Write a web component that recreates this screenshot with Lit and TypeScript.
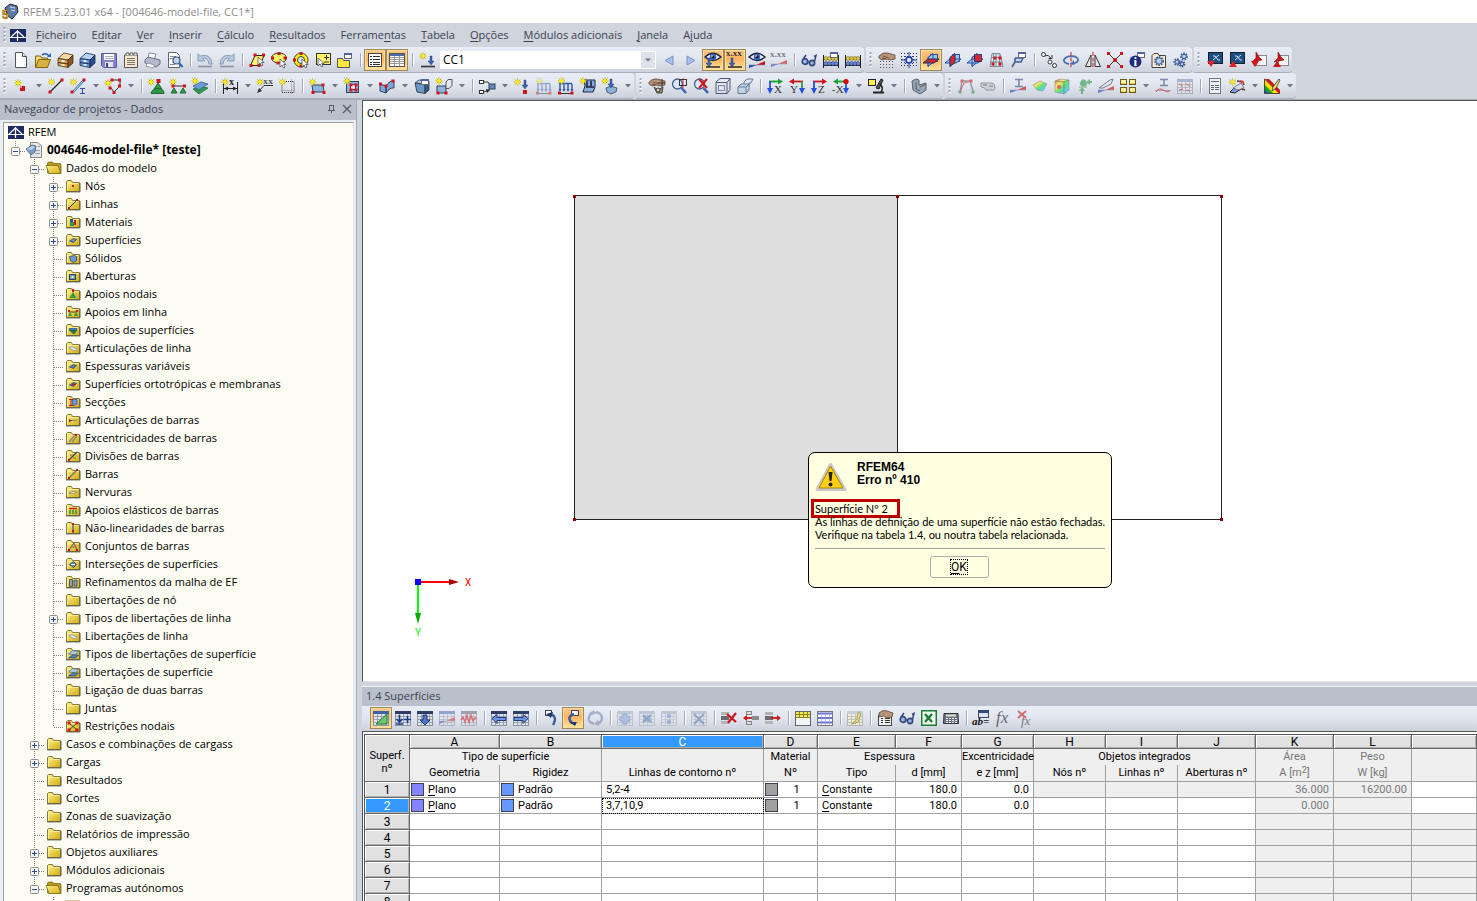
import { LitElement, html, css, svg, nothing, type TemplateResult } from "lit";
import { customElement } from "lit/decorators.js";
import { classMap } from "lit/directives/class-map.js";

/* ---------- small drawing vocabulary for the 16 px icons ---------- */
const P = (d: string, s = "none", f = "none", w = 1) =>
  svg`<path d=${d} stroke=${s} fill=${f} stroke-width=${w} />`;
const R = (x: number, y: number, w: number, h: number, f: string, s = "none") =>
  svg`<rect x=${x} y=${y} width=${w} height=${h} fill=${f} stroke=${s} />`;
const C = (x: number, y: number, r: number, f: string, s = "none", w = 1) =>
  svg`<circle cx=${x} cy=${y} r=${r} fill=${f} stroke=${s} stroke-width=${w} />`;
const T = (x: number, y: number, t: string, f: string, size = 7, style = "normal", weight = "bold") =>
  svg`<text x=${x} y=${y} fill=${f} font-size=${size} font-style=${style} font-weight=${weight} font-family="Liberation Serif, serif">${t}</text>`;
const G = (o: number, ...k: unknown[]) => svg`<g opacity=${o}>${k}</g>`;

const RED = "#d0141c", BLUE = "#2a4f9e", INK = "#222", GREEN = "#2f9a48", PANE = "#9cc4ee";
const star = (x = 3.5, y = 4) => [
  P(`M${x - 3.5} ${y}h7M${x} ${y - 3.5}v7M${x - 2.5} ${y - 2.5}l5 5M${x + 2.5} ${y - 2.5}l-5 5`, "#b8a800"),
  P(`M${x - 2.5} ${y}h5M${x} ${y - 2.5}v5`, "#ffee20", "none", 1.6),
];
const node = (x: number, y: number, c = RED) => R(x - 1.5, y - 1.5, 3, 3, c);
const cursor = (x: number, y: number) =>
  P(`M${x} ${y}v8l2-2 1.5 3 1.5-.8-1.400-2.700h2.600z`, "#555", "#fff", 0.8);
const arrow = (x: number, y: number, c = "#3c64b8") => P(`M${x - 1} ${y}h2v5h2l-3 4-3-4h2z`, "#1c3468", c, 0.4);
const win = (x: number, y: number) => [R(x + 0.5, y + 0.5, 7, 5, "#fff", "#667"), R(x, y, 8, 2, "#5464a0")];
const tris = (y = 15) => [P(`M0 ${y}v-3l8 0z`, "none", "#2444c8"), P(`M16 ${y - 7}v4h-9z`, "none", RED), P(`M0 ${y - 3}h16`, "#889", "none", 0.6)];
const dots = (x: number, y: number, w: number, h: number, c = "#555") => {
  const out = [];
  for (let j = y; j <= y + h; j += 3) out.push(svg`<path d=${`M${x} ${j}.5h${w}`} stroke=${c} stroke-dasharray="1 2" />`);
  return out;
};
const sheet = (head = "#3c62a8", line = "#8a93a5", body = "#dfe5e6") => [
  R(0.5, 1.5, 15, 14, body, line), P("M0 6.500h16M0 9.500h16M0 12.500h16M4.500 2v13M8.500 2v13M12.500 2v13", line, "none", 0.8),
  R(0, 1, 16, 3, head),
];
const cabinet = (a: string, b: string, c: string, s: string) => [
  P("M1 6.500L7 1l9 2-5 5z", s, c, 0.8), P("M1 6.500l10 1.500v7.500l-10-2z", s, a, 0.8), P("M11 8l5-5v8l-5 4.500z", s, b, 0.8),
  P("M1 10.500l10 1.500", s), P("M4.500 9h3M4.500 13h3", "#fff", "none", 1.300),
];
const solid = (f = "#6f97c8", t = "#b9d2ee", s = "#3c5c88") => [
  P("M1 5l4-3 10 1-4 3z", "#234", t, 0.8), P("M1 5l10 1v9.500l-8-1.500z", "#234", f, 0.8), P("M11 6l4-3v9l-4 3.500z", "#234", s, 0.8),
];
const glass = [C(6.500, 6, 5, "#d9e8f8", "#4a5f86", 1.300), P("M10.500 10l4.500 5", "#3f63b0", "none", 2.6)];
const eye = (y = 5) => [
  P(`M0 ${y}q8-7.500 16 0q-8 7-16 0z`, "#1c2440", "#e8eefa", 1.400), C(8, y, 3.200, "#3560b8"), C(8, y, 1.300, "#111"), C(7, y - 1, 0.8, "#fff"),
];
const specs = (c = "#33497c") => [
  C(4, 9.500, 2.800, "#9cb8e8", c, 1.700), C(11, 11, 2.600, "#9cb8e8", c, 1.700), P("M1.500 8L5 3M13.500 9.500l1.500-6-2 1M6.500 10h2", c, "none", 1.500),
];
const abacus = [
  P("M.5 3v13M15.500 3v13M0 7.500h16M0 13.500h16", INK),
  ...[3, 6.500, 10, 13].map((x) => C(x, 6.500, 1.900, "#e6cf4a", "#665c20", 0.6)),
  ...[3, 6.500, 10, 13].map((x) => C(x, 11.500, 1.900, "#6c8cd8", "#26366a", 0.6)),
];
const gear = (x: number, y: number, r: number, c = "#3a5c9c") => [
  svg`<circle cx=${x} cy=${y} r=${r} fill="none" stroke=${c} stroke-width="1.800" stroke-dasharray="1.600 1" />`,
  C(x, y, r - 0.8, "#b8cbea", c, 1),
];
/* three crossing work planes; the active one is filled red and drawn in front */
const planes = (active: number) => {
  const shapes = ["M0 11l5-4h11l-5 4z", "M5 5.500l5-4v9l-5 4z", "M7.500 2.500h7v7h-7z"];
  const order = [2, 1, 0].filter((i) => i !== active).concat(active);
  return [...order.map((i) => P(shapes[i], i === active ? "#1c2c5c" : BLUE, i === active ? "#e0242c" : PANE)), P("M7.500 2.500h7v7M10 1.500l-5 4v9", BLUE, "none", 0.8)];
};
const axes = (l: string, flip = false, z = "#2450e0") => {
  const h = l === "X" || l === "-X" ? "#18a030" : RED;
  return [
    P(flip ? "M14 3.500H3" : "M2 3.500h11", h, "none", 1.800),
    P(flip ? "M5 .5l-5 3 5 3z" : "M11 .5l5 3-5 3z", "none", h),
    P(flip ? "M13 3v8" : "M3 3v8", l === "Y" ? GREEN : z, "none", 1.800), P(flip ? "M10 10h6l-3 6z" : "M0 10h6l-3 6z", "none", z),
    T(l === "-X" ? -1 : flip ? 1 : 7, 15, l, "#333", 11, "normal", "normal"),
  ];
};
const hand = [P("M0 4q4-4 8-3l8 2v4l-5 1-4-1-4 1-3-2z", "#5a4636", "#b89478", 0.8), P("M4 4l6 2M3 6l4 1", "#5a4434", "none", 0.8)];
const gridLoad = [P("M1 5.500h13M2 6v6M6 6v6M10 6v6M14 6v6", "#2f57a8", "none", 1.400), P("M.5 11h3l-1.500 3zM4.500 11h3l-1.500 3zM8.500 11h3l-1.500 3zM12.500 11h3l-1.500 3z", "none", "#2f57a8"), P("M2 15.500h12", "#333"), node(1.500, 15), node(14, 15)];
const undoBody = (m: boolean) => svg`<g transform=${m ? "matrix(-1 0 0 1 16 0)" : ""}>
  ${P("M1 2v7h7L5.500 6.500q5-2 6.500 5.500h3q-1-11-11.500-8z", "#8a9cb8", "#b9cae2")}${P("M1 14.500h14", "#8a93a5", "none", 1.600)}</g>`;
const rows3 = (x: number, w: number) => [R(x, 2, w, 3, "#b4b4b4"), R(x, 6, w, 4, "#6c6c6c"), R(x, 11, w, 3, "#b4b4b4")];
const rainbow = (d: string) => svg`<path d=${d} fill="url(#rainbow)" stroke="#777" stroke-width=".6" />`;

const ICONS: Record<string, unknown> = {
  new: [P("M2.500.5h7l4 4v11h-11z", "#555", "#fff"), P("M9.500.5v4h4", "#555", "#ddd")],
  open: [P("M.5 15V4h5l1 2h6v3", "#7b6414", "#f4dc7c"), P("M.5 15.500l3-8h12l-3 8z", "#7b6414", "#d8b040"), P("M7 3q4-3 7 1", "#2f62b8", "none", 1.600), P("M12 5h4V1z", "none", "#2f62b8")],
  cabBrown: cabinet("#d8a050", "#8a5820", "#f4d8a8", "#4c3010"), cabBlue: cabinet("#6c94d8", "#2a4c94", "#b8d0f4", "#142850"),
  save: [P("M.5 1.500h15v14h-13l-2-2z", "#5c5c98", "#8484cc"), R(3, 2, 10, 6, "#fff"), P("M4 4.500h8M4 6.500h8", "#aab"), R(4, 10, 8, 5, "#e4e4f0"), R(5, 11, 2, 4, "#448")],
  notes: [P("M1.500 3h13v12.500h-13z", "#555", "#fbe8cc"), P("M3 3V1h3v2M7 3V1h3v2M11 3V1h3v2", "#555", "#fff"), P("M4 6.500h8M4 8.500h8M4 10.500h8M4 12.500h8", "#777")],
  print: [P("M4 1l7 1-2 7-6-1z", "#889", "#fff"), P("M0 8l3-3 12 3v4l-4 3-11-4z", "#556", "#b4bace", 0.8), P("M2 11l8 2-2 3-7-2z", "#889", "#fff", 0.8)],
  preview: [P("M1.500.5h8l3 3v12h-11z", "#666", "#fff"), P("M3 4.500h6M3 6.500h3M3 12.500h5", "#889"), C(9.500, 8.500, 3.500, "#bcd4f4", "#456", 1.200), P("M12 11l3.500 4", "#3768b8", "none", 2.200)],
  undo: undoBody(false), redo: undoBody(true),
  selPar: [P("M1.500 13.500L6 3.500h9l-4 10z", INK, "#fff46a"), node(6, 3), node(14.500, 3), node(2, 13.500), node(10, 13.500), cursor(9, 5)],
  selEll: [svg`<ellipse cx="8" cy="6" rx="7.500" ry="5" fill="#fff46a" stroke="#333" />`, node(8, 1.500), node(1.500, 6), node(14, 6), node(7, 11), cursor(9, 7)],
  selRing: [C(8, 8, 7, "#fff000", "#444"), C(8, 8, 3.500, "#dfe5f0", "#444"), node(8, 1.500), node(1.500, 8), node(8, 14), cursor(9, 7)],
  selBox: [R(1.500, 1.500, 14, 11, "#fff46a", "#333"), P("M9 5.500h5M11.500 3v5M9 10h5", "#333"), cursor(3, 6)],
  selWin: [P("M.5 6.500h5l1 2h6v7h-12z", "#555", "#ffe840"), ...win(7, 1)],
  list: [R(1.500, 1.500, 13, 13, "#fff", "#444"), P("M3 4.500h2M3 7.500h2M3 10.500h2M3 12.500h2", "#333"), P("M6 4.500h7M6 7.500h7M6 10.500h7M6 12.500h7", "#333")],
  table: [R(.5, 1.500, 15, 13, "#fff", "#555"), R(1, 2, 14, 2, "#4a6ca8"), P("M1 5.500h14M1 7.500h14M1 9.500h14M1 11.500h14M5.500 4v10M10.500 4v10", "#999")],
  loadNew: [star(4, 4), arrow(12, 4), P("M2 14.500h14", "#333", "none", 1.600)],
  prev: P("M12 4v9L4 8.500z", "#7c92c0", "#a8c0ee"), next: P("M4 4v9l8-4.500z", "#7c92c0", "#a8c0ee"),
  eyeLoad: [eye(5), arrow(4, 6), P("M1 15h14", "#333", "none", 1.600)],
  valLoad: [T(-1, 4, "x.xx", "#333", 9), arrow(5, 6), P("M1 15h14", "#333", "none", 1.600)],
  eyeTri: [tris(16), eye(5)], valTri: G(0.6, T(-1, 5, "x.xx", "#333", 9), tris(15)),
  specs: specs(), abacusWin: [abacus, win(7, 0)], abacus,
  handGrid: [dots(1, 9, 15, 6), hand],
  snap: [dots(0, 1, 16, 14, "#333"), P("M8 0v16M0 8h16M4 4l8 8M12 4l-8 8", "#1c38b0"), C(8, 8, 3, "#dde4f4", "#1c38b0", 1.500)],
  planeA: planes(0), planeB: planes(1), planeC: planes(2),
  mesh: [P("M3 1.500h8l3 13h-13zM2.500 5.500h9.500M1.500 10h12M7 2v12M10 2l1 12M4.500 2v12", "#7e8c9c", "#d8ecf4"), node(6, 6), node(11, 6), node(4, 12), node(11, 12)],
  clipWin: [P("M4 6h8l-2 4h-6l-3 5M4 6v4", "#445a90", "#c4d4ee", 1.500), win(7, 0)],
  copy: [C(2.500, 2.500, 2, "#fff", "#333"), C(9, 10, 2, "#fff", "#333"), C(13.500, 13.500, 2, "#fff", "#333"), P("M4 4q4-2 6 3M7.500 6.500h3.500v-3.500", "#333")],
  rotate: [svg`<path d="M8 0v16" stroke=${RED} stroke-dasharray="4 1.500" />`, P("M6 12q-6-1-5-4.500Q4 3 12 4.500q5 2.500 2 5.500l-4 2", "#4a6eb0", "none", 1.800), P("M11 8v5l-4-1z", "none", "#4a6eb0")],
  mirror: [svg`<path d="M8 0v16" stroke=${RED} stroke-dasharray="4 1.500" />`, P("M6 3v11.500h-5.500z", "#333", "#e8e8e8"), P("M10 3v11.500h5.500z", "#333", "#e8e8e8")],
  cross: [P("M1 1l14 14M15 1l-14 14", "#333"), node(1.500, 1.500), node(14.500, 1.500), node(1.500, 14.500), node(14.500, 14.500), C(8, 8, 2, RED)],
  info: [win(8, 0), C(6.500, 9.500, 6, "#1c2c78"), T(4.500, 14, "i", "#fff", 13)],
  gearBox: [P("M1 3.500l2-2h4l1 2h6.500v12h-13.500z", "#444", "#f6e8cc"), gear(8, 9, 4)], gears: [gear(4, 10, 2.800), gear(9, 12, 2.500), gear(11, 4.500, 3)],
  cadDown: [R(1.500, .5, 14, 11, "#1c5080", "#123"), P("M6 4h2l3 4h2M12 3l-6 5", "#cfe6ff"), P("M0 9h8l-4 6z", "none", "#e02424")],
  cadUp: [R(1.500, .5, 14, 11, "#1c5080", "#123"), P("M6 4h2l3 4h2M12 3l-6 5", "#cfe6ff"), P("M0 15h8l-4-6z", "none", "#e02424")],
  pdfDown: [R(5.500, 3.500, 10, 10, "#f4f4f4", "#888"), P("M5 0l3 5 3 3-10 2 4-4z", "#701010", RED, .6), P("M0 9h8l-4 6z", "none", RED)],
  pdfUp: [R(5.500, 3.500, 10, 10, "#f4f4f4", "#888"), P("M5 0l3 5 3 3-10 2 4-4z", "#701010", RED, .6), P("M0 15h8l-4-6z", "none", RED)],

  nodeNew: [star(5, 5), R(7, 8, 5, 5, RED), R(7, 8, 2, 2, "#f88")],
  line: [P("M2 14L14 2", "#222", "none", 1.300), star(3.500, 4), node(2, 14), node(14, 2)],
  beam: [P("M3 14L14 2", "#3c6ea8", "none", 2.400), P("M3 14L14 2", "#c8dcf0", "none", 1), star(3.500, 4), node(2, 14), node(14, 2), P("M10 10.500h5M10 15.500h5M12.500 10v5", "#3450a0")],
  poly: [P("M6 2h9v6l-6 6-3-4", "#333"), star(3, 5), node(7, 2), node(14.500, 2), node(14.500, 8), node(9, 14.500), node(5, 10)],
  supNode: [star(3, 4), P("M10 5l-4 6h8z", "#1f6a34", GREEN), R(8.500, 1, 4, 4, RED), P("M3 15.500q1-5 7-5t6 5z", "#1f6a34", GREEN)],
  supLine: [star(3, 4), P("M2 8h13", "#333"), node(3, 8), node(14.500, 8), P("M4 10l-3 5h6zM13 10l-3 5h6z", "#1f6a34", GREEN)],
  supSurf: [P("M1 11l8-3 7 2-9 6z", "#1f6a34", GREEN, 0.8), P("M1 8l8-4 7 2-9 6z", "#345c90", "#6c9cd8", 0.8), star(3, 3)],
  dim: [P("M1.500 4v12M15.500 4v12M1 10.500h15", "#222"), P("M2 10.500l4-2v4zM15 10.500l-4-2v4z", "none", "#222"), star(3, 4), T(7, 7, "x", "#222", 10)],
  xx: [P("M1 14L7 7.500h9", "#333"), P("M0 15l2-5 3 3z", "none", "#333"), star(3, 4), T(6, 6, "XX", "#333", 7)],
  dotRect: [svg`<path d="M5 3.500h10v11h-12v-9" fill="none" stroke="#333" stroke-dasharray="1 1" />`, P("M12.500 1v15M2 12.500h14", "#999", "none", .6), star(3.500, 4)],
  surf: [P("M3 7h11l1 7H4z", "#345", "#8cb4e0"), star(3.500, 4), node(14, 7), node(4, 14.500), node(15, 14.500)],
  opening: [R(2.500, 3.500, 12, 11, "#8cb4e0", "#345"), R(6.500, 6.500, 5, 5, "#eef", "#a22"), node(7, 7), node(12, 7), node(7, 12), node(12, 12), star(3, 3)],
  curved: [P("M1 6l6 2v7l-6-2zM7 8q4-6 8-5v7q-4-1-8 5z", "#345", "#7ca8dc"), node(1.500, 6), node(7, 8), node(14, 3)],
  solidWin: [solid(), win(7, 1)],
  solids: [P("M1 8h9v7h-9z", "#345", "#8cb4e0"), P("M10 4l2-2.500h4v6l-3 3h-3z", "#555", "#e4e8ee"), star(3, 3), node(2, 15), node(10, 15)],
  joint: [R(.5, 2.500, 4, 3, "#fff", "#333"), R(.5, 12.500, 4, 3, "#fff", "#333"), P("M5 4h4l2 3M5 14l5-2 2-3", "#333"), P("M7 11l4 1-3 3z", "none", "#222"), R(10, 6, 6, 5, "#5c8cc8", "#345")],
  loadNode: [star(3.500, 4), arrow(11, 2), R(9, 12, 4, 4, RED)],
  loadLineOff: G(0.45, gridLoad, star(3.500, 3)), loadLine: [gridLoad, star(3.500, 3)],
  loadSurf: [P("M4 2h11v7l-2 5H3l2-6z", "#224", "#86aede"), P("M7 3v6M11 3v6M6 9h8", "#224", "none", 1.600), star(3, 3)],
  loadSolid: [P("M4 10l5-2 6 2-1 4-5 2-4-2z", "#345", "#8cb0d8", .8), arrow(9, 1), star(3, 3)],
  pan: [hand, P("M13 1v8M9 5h7", "#333"), P("M5 9l4 3 5-3-1 6h-5z", "#443", "#a09070"), C(9, 12, 2, "#d8d4c8", "#333")],
  zoomRect: [glass, R(8.500, 1.500, 7, 6, "none", "#333"), P("M12 0v10", RED, "none", .8)],
  zoomX: [glass, P("M6 1l8 9M14 1L6 10", RED, "none", 2)],
  wire: [P("M1 4l4-3.500h10v11l-3 4H1zM1 4.500h11v11M12 4.500l3-4", "#4c5a78"), R(3.500, 7.500, 6, 5, "#dde4f0", "#7c8aa8")],
  boxes: [P("M7 4l3-3h6l-2 4h-2v4h-5z", "#667a98", "#dce4f0"), P("M1 9l3-3h8v6l-3 3.500H1z", "#667a98", "#c4d2e6"), P("M1 9h8v6M9 9l3-3", "#667a98")],
  axX: axes("X"), axY: axes("Y", true), axZ: axes("Z"), axNX: [axes("-X", true), C(13, 3.500, 2.600, "#d00")],
  scope: [R(.5, 1.500, 7, 6, "#fff14a", "#222"), P("M5 14.500h11", "#222", "none", 2), P("M8 10l5-9 2 1-4 9z", "#222", "#555"), P("M12 6q4 4 1 8", "#222", "none", 1.500)],
  greySolid: [P("M1 3l4-2 3 1v5l7-2v7l-6 4-7-4z", "#555f6c", "#98a4b4"), P("M5 4v7l4 2M9 9l6-3", "#555f6c")],
  frame: G(0.6, P("M2 15L4 3h8l3 10", "#667", "none", 1.500), node(4, 3), node(13, 3), node(2, 14, GREEN), node(15, 14, GREEN), P("M2 14L6 5l7-2", RED)),
  roller: G(0.6, P("M1 5h10q4 0 4 4t-4 3H6q-1-3-5-3z", "#666", "#c8c8c8"), P("M3 7h4M9 8h4", "#333")),
  ibeam: G(0.65, P("M5 1.500h8M5 8.500h8M9 1v7", "#445a90", "none", 1.600), tris(15)),
  rainbowSurf: G(0.75, rainbow("M1 7l7-4 7 3-4 7-6-1z")), rainbowCube: G(0.75, rainbow("M1 3l5-2 9 1v10l-5 4-9-2z"), P("M1 3l9 1 5-2M10 4v12", "#555", "none", .7), C(5, 9, 2, "#e33")),
  greenArrows: G(0.6, P("M6 2h3l2 4-2 2h-3l-2-2zM3 9h8", GREEN, GREEN), P("M10 4l4-3v2h2v2h-2v2zM5 16v-3h-2l3-4 3 4h-2v3z", "none", GREEN)),
  knife: G(0.65, P("M1 10L12 2l3-1-2 5-8 4z", "#445", "#e8ecf4"), tris(15)),
  blocks: [[0, 1], [9, 1], [0, 9], [9, 9]].map(([x, y]) => [R(x + .5, y + .5, 6, 5, "#e8cc58", "#6a5c20"), R(x + 1, y + 1, 5, 3, "#fff0a0")]),
  ibeamCurve: G(0.65, P("M5 1.500h8M5 7.500h8M9 1v7", "#445a90", "none", 1.600), P("M0 12.500h16", "#889"), P("M1 14q3-5 7-2t7 1", RED)),
  tableRed: G(0.6, sheet("#8890c0"), P("M2 6l4 2M9 6l4 2M2 12l4-1M9 12l4 1", RED)),
  doc: [R(2.500, .5, 11, 15, "#eceff4", "#777"), P("M4 3.500h8M4 7.500h3M8 7.500h4M4 9.500h3M8 9.500h4M4 11.500h3M8 11.500h4", "#667")],
  brush: [P("M1 14l4-4 7 1-6 4z", "#223", "#7ca0dc"), P("M8 3l6 1 1 3M10 10l6 2", "#633", "none", 1.500), P("M11 2l4 1v3l-3-1z", "none", "#d44"), P("M4 10l8-5 3 5-6 2z", "#556", "#d8dce4", .7), star(3.500, 4)],
  rainbowPen: [P("M.5 1v14.500h15z", "#222", "#ffe000", .8), P("M1 1h4l11 11v3.500h-1z", "none", RED), P("M1 7l8 8H1z", "none", "#18a030"), P("M1 12l3 3.500H1z", "none", "#2040d0"), P("M15 1L9 9l-1 4 4-3 4-8z", "#333", "#ffe870", .8)],

  tTri: [sheet(), P("M3 14L14 4v10z", "#1f7a34", "#6cc86c")],
  tPlus: [sheet("#2c3c64"), P("M4.500 5v7M1.500 9l3 3 3-3M1 14h7M9 9.500h7M12.500 6v7", "#1c3c90", "none", 1.600)],
  tDown: [sheet("#2c3c64"), P("M6 5h4v5h3l-5 5-5-5h3z", "#223a78", "#4c74c4")],
  tTris: G(0.5, sheet(), tris(14)), tWave: G(0.55, sheet("#667"), P("M0 10l2-3 2 5 2-7 2 8 2-8 2 6 2-3h2", RED, "none", 1.400)),
  tLeft: [sheet("#2c3c64"), P("M1 8.500l5-4v3h9v3H6v3z", "#223a78", "#6c94e0")], tRight: [sheet("#2c3c64"), P("M15 8.500l-5-4v3H1v3h9v3z", "#223a78", "#6c94e0")],
  back: [R(2.500, .5, 6, 5, "#fff", "#445"), P("M7 4q8 2 3 11", "#3c5c9c", "none", 2.400), P("M3 4l7-2-2 6z", "none", "#223a68")],
  backOn: [R(6.500, .5, 7, 5, "#f4f6fa", "#445"), P("M9 4q-8 3-2 9", "#3c5c9c", "none", 2.600), P("M4 12h8l-2 4z", "none", "#223a68")],
  cycle: G(0.6, P("M7 14Q0 12 2 7q1-4 5-5M9 2q6 1 6 7-1 4-5 5", "#7c8eae", "none", 2.400), P("M6 0l4 3-5 2zM11 10l-4 4 5 2z", "none", "#7c8eae")),
  gPlus: G(0.6, sheet("#a8b0c0", "#a8b0c0"), P("M6 4h4v3h3v4h-3v3h-4v-3H3V7h3z", "#6c84b8", "#90a8dc")),
  gX: G(0.6, sheet("#a8b0c0", "#a8b0c0"), P("M5 6h6v5H5z", "#6c84b8", "#90a8dc"), P("M4 5l8 7M12 5l-8 7", "#6078b0", "none", 2)),
  gDots: G(0.6, sheet("#a8b0c0", "#a8b0c0"), C(8, 6, 2.200, "#7890c8"), C(8, 12, 2.200, "#7890c8")),
  gDel: G(0.6, sheet("#a8b0c0", "#a8b0c0"), P("M3 4l10 10M13 4L3 14", "#6078b0", "none", 2)),
  rowX: [rows3(0, 8), P("M6 4l9 8M15 3L7 13", RED, "none", 2.200)],
  rowL: [R(9, 6, 7, 4, "#8c8c8c"), R(3.500, 1.500, 5, 3, "#ddd", "#888"), R(3.500, 11.500, 5, 3, "#ddd", "#888"), P("M0 8l4-3v6z", "none", RED), P("M3 8h6", RED, "none", 1.800)],
  rowR: [rows3(0, 8), P("M16 8l-4-3v6z", "none", RED), P("M13 8H6", RED, "none", 1.800)],
  yHead: [R(.5, 1.500, 15, 14, "#f4f4f4", "#666"), R(1, 2, 14, 5, "#f4e850"), P("M1 4.500h14M1 7.500h14M4.500 2v5M8.500 2v5M12.500 2v5", "#8a8430")],
  stripes: [R(.5, 1.500, 15, 14, "#f8f8fc", "#777"), P("M1 3.500h14M1 8h14M1 12.500h14", "#6c74d0", "none", 2), P("M4.500 2v13M8.500 2v13M12.500 2v13", "#9aa0d0", "none", .6)],
  tYellow: G(0.7, sheet("#c0c4cc", "#a8a8a0", "#f4f2cc"), P("M11 2l3 2-3 8-6 2 5-5z", "#8a8230", "#f0e048")),
  handTable: [R(1.500, 5.500, 13, 10, "#f0f0f0", "#444"), P("M4 8.500h2M8 8.500h5M4 10.500h2M8 10.500h5M4 12.500h2M8 12.500h5", "#333"), P("M2 3q4-4 8-2l6 2-1 4-5 1-4-2-4 1z", "#5a4636", "#b89478", .8)],
  excel: [R(1, 1, 14, 14, "#eef6ee", "#1f7a34"), R(.5, .5, 15, 15, "none", "#1f7a34"), P("M4 4l7 8M11 4l-7 8", "#1f7a34", "none", 2.400)],
  calc: [P("M1 3.500h14l.5 10h-15z", "#333", "#707680"), R(3, 4.500, 10, 2, "#d4e4d4"), svg`<path d="M3 8.500h11M3 10.500h11M3 12.500h11" stroke="#e8ecf4" stroke-dasharray="2 1" />`],
  ab: [R(5.500, .5, 10, 7, "#dde4f4", "#445"), R(5, 0, 11, 3, "#334878"), T(-1, 15, "ab=", "#111", 11, "italic")],
  fx: T(1, 13, "fx", "#667", 17, "italic", "normal"), fxX: [T(4, 15, "fx", "#778", 13, "italic", "normal"), P("M1 1l8 7M9 1L1 8", "#d46a70", "none", 1.800)],
};

/* ---------- glyphs drawn on top of the folders of the tree ---------- */
const plate = (f: string) => P("M4.500 9l4-2.500 3 1-3 3z", "#345", f, 0.7);
const OVER: Record<string, unknown> = {
  node: R(7, 7, 2, 2, RED), line: [P("M4 12l7-7", "#443"), R(3, 11, 2, 2, RED), R(11, 3, 2, 2, RED)],
  mat: [R(5, 5, 3, 3, "#2850c0"), R(5, 8, 4, 4, GREEN), R(9, 6, 2, 5, RED)],
  surf: plate("#5c8cd0"), solid: P("M4.500 6.500l5-1 2 1v4l-3 2-3-2z", "#345", "#6c98d8", 0.8),
  hole: [R(4.500, 6.500, 6, 5, "#6c98d8", "#345"), R(6.500, 8, 2, 2, "#fe8")],
  sup: [P("M8 6l-3.500 6h7z", "none", GREEN), R(7, 3, 2, 3, RED)],
  supl: [P("M4 8h8", "#443"), P("M5 8l-2 4h4zM11 8l-2 4h4z", "none", GREEN), R(3, 6, 2, 2, RED), R(11, 6, 2, 2, RED)],
  sups: [P("M4 8h8l-3 4z", "#153", "#2c8050", 0.7), R(4, 6, 8, 2, "#456ca8")],
  hinge: [P("M4 8l3-1.500 5 3-2 1.500z", "#889", "#e8ecf4", 0.7)], thick: plate("#4878b8"), ortho: [plate("#4878b8"), P("M7 8.500h4", RED, "none", 1.300)],
  sec: [P("M7 6l5-1v5l-4 2z", "#348", "#6c94e8", 0.7), P("M4 5.500h4M4 11.500h4M6 6v6", RED)],
  mh: [P("M5 8.500h7", "#887"), P("M4 7l3 1.500-3 2z", "none", "#833")], ecc: [P("M4 12l6-7M7 12l5-6", "#887", "none", 1.300), R(10, 4, 2, 2, RED)],
  div: [P("M4 12l8-8", "#443", "none", 1.300), P("M5 7h3M8 10h3", "#776"), R(3, 11, 2, 2, RED)],
  bar: [P("M4 12l8-8", "#776", "none", 1.500), R(3, 11, 2, 2, RED), R(11, 3, 2, 2, RED)], rib: P("M4 9q4-3 8-1-3 3-8 1z", "#887", "#e8e4c8", 0.8),
  el: [P("M4 6.500h8", RED, "none", 1.500), P("M5 8v4M8 8v4M11 8v4", GREEN, "none", 1.600)], nl: [P("M8 4v9", "#667", "none", 1.500), R(7, 3, 2, 2, RED), R(7, 10, 2, 2, RED)],
  set: [P("M4 12l5-7 3 7M6 9h5", "#865", "none", 1.200), R(3, 11, 2, 2, RED), R(11, 11, 2, 2, RED)], inter: [P("M4.500 8.500l4-3 3 3-3 3z", "#345", "#5c8cd0", 0.8), P("M6 8.500h4", "#fff")],
  mesh: [P("M4.500 5.500h3v7h-3zM9 6h3v6h-3z", "#445", "#8ca0b8", 0.8)], rel: [P("M3.500 8l4-3.500 6 1-3 3.500z", "#567", "#a8cce8", 0.7), P("M3.500 12l4-3 6 0-3 3z", "#345", "#4c84c0", 0.7)],
  nodal: [P("M4 5l8 7M12 5l-8 7", "#443"), node(4, 5), node(12, 5), node(4, 12), node(12, 12)],
};
const bridge = [R(0, 2, 16, 13, "#1c2a66"), P("M0 10.500h16M7.500 3v11M7.500 4L1 10M7.500 4L14 10", "#fff", "none", 1.200)];
const treeIcon = (k: string) => {
  if (k === "bridge") return bridge;
  if (k === "model") return [P("M3.500.5h7l4 3v12h-11z", "#888", "#e4e6ea"), P("M8 8.500h5M8 11.500h5M11 4.500h2", "#999"), P("M-1 7l6-4 4 1-1 6-4 3z", "#567", "#7a9cc8", .8), P("M0 7l5-3 3 1-4 3z", "none", "#bcd4f0")];
  if (k === "open") return [P("M1.500 13V3l1-1h4l1 1.500h7l.5 2V13z", "#7a6c20", "#b89a18", .8), P("M0 5.500h12l3 8H3z", "#7a6a14", "url(#folder)", .8)];
  if (k === "cut") return R(0, 2, 15, 14, "#e8c090");
  return [P("M1.500 13.500v-10l1-1h4l1 2h7v9z", "#857a40", "url(#folder)"), P("M1 13.900h14V5", "#5f5a48"), P("M2.500 12.500V5.500h11", "#fff39a", "none", .8), k ? OVER[k] : nothing];
};

type Item = [level: number, toggle: "" | "+" | "-", icon: string, label: string];
const TREE: Item[] = [
  [0, "", "bridge", "RFEM"], [1, "-", "model", "004646-model-file* [teste]"], [2, "-", "open", "Dados do modelo"],
  [3, "+", "node", "Nós"], [3, "+", "line", "Linhas"], [3, "+", "mat", "Materiais"], [3, "+", "surf", "Superfícies"],
  [3, "", "solid", "Sólidos"], [3, "", "hole", "Aberturas"], [3, "", "sup", "Apoios nodais"], [3, "", "supl", "Apoios em linha"],
  [3, "", "sups", "Apoios de superfícies"], [3, "", "hinge", "Articulações de linha"], [3, "", "thick", "Espessuras variáveis"],
  [3, "", "ortho", "Superfícies ortotrópicas e membranas"], [3, "", "sec", "Secções"], [3, "", "mh", "Articulações de barras"],
  [3, "", "ecc", "Excentricidades de barras"], [3, "", "div", "Divisões de barras"], [3, "", "bar", "Barras"], [3, "", "rib", "Nervuras"],
  [3, "", "el", "Apoios elásticos de barras"], [3, "", "nl", "Não-linearidades de barras"], [3, "", "set", "Conjuntos de barras"],
  [3, "", "inter", "Interseções de superfícies"], [3, "", "mesh", "Refinamentos da malha de EF"], [3, "", "", "Libertações de nó"],
  [3, "+", "", "Tipos de libertações de linha"], [3, "", "hinge", "Libertações de linha"], [3, "", "rel", "Tipos de libertações de superfície"],
  [3, "", "rel", "Libertações de superfície"], [3, "", "", "Ligação de duas barras"], [3, "", "", "Juntas"], [3, "", "nodal", "Restrições nodais"],
  [2, "+", "", "Casos e combinações de cargass"], [2, "+", "", "Cargas"], [2, "", "", "Resultados"], [2, "", "", "Cortes"],
  [2, "", "", "Zonas de suavização"], [2, "", "", "Relatórios de impressão"], [2, "+", "", "Objetos auxiliares"],
  [2, "+", "", "Módulos adicionais"], [2, "-", "open", "Programas autónomos"], [3, "", "cut", ""],
];
const hasNext = (i: number, level: number) => {
  for (let j = i + 1; j < TREE.length; j++) {
    if (TREE[j][0] === level) return true;
    if (TREE[j][0] < level) return false;
  }
  return false;
};

/* "|" separator, "*" pressed, ">" has a drop-down arrow, "#" load-case selector */
const BAR1 = [
  "new open cabBrown cabBlue save notes print preview | undo redo | selPar selEll selRing selBox selWin | *list *table | loadNew # prev next *eyeLoad *valLoad eyeTri valTri | specs abacusWin abacus",
  "handGrid snap *planeA planeB planeC mesh clipWin | copy rotate mirror cross info gearBox gears",
  "cadDown cadUp pdfDown pdfUp",
];
const BAR2 = [
  "nodeNew> line beam> poly> | supNode supLine supSurf | dim> xx dotRect | surf> opening> curved> solidWin solids> | joint> loadNode loadLineOff loadLine loadSurf loadSolid>",
  "pan zoomRect zoomX wire boxes | axX axY axZ axNX> scope> | greySolid>",
  "frame roller | ibeam rainbowSurf rainbowCube greenArrows knife blocks> ibeamCurve tableRed | doc brush> rainbowPen>",
];
const BAR3 =
  "*tTri tPlus tDown tTris tWave | tLeft tRight | back *backOn cycle | gPlus gX gDots | gDel | rowX rowL rowR | yHead stripes | tYellow | handTable specs excel calc | ab fx fxX";

/* menu labels; "_" precedes the access key */
const MENU = "_Ficheiro,E_ditar,_Ver,_Inserir,_Cálculo,_Resultados,Ferrame_ntas,_Tabela,_Opções,_Módulos adicionais,_Janela,A_juda".split(",");
const keyed = (t: string) => {
  const i = t.indexOf("_");
  return i < 0 ? html`${t}` : html`${t.slice(0, i)}<u>${t[i + 1]}</u>${t.slice(i + 2)}`;
};

const COLS: [string, number][] = [
  ["A", 90], ["B", 102], ["C", 162], ["D", 54], ["E", 78], ["F", 66], ["G", 72], ["H", 72], ["I", 72], ["J", 78], ["K", 78], ["L", 78],
];
const ROWS: Record<number, string[]> = {
  1: ["_Plano", "Padrão", "5,2-4", "1", "_Constante", "180.0", "0.0", "", "", "", "36.000", "16200.00"],
  2: ["_Plano", "Padrão", "3,7,10,9", "1", "_Constante", "180.0", "0.0", "", "", "", "0.000", ""],
};

@customElement("app-root")
export class AppRoot extends LitElement {
  static styles = css`
    :host { display: flex; flex-direction: column; height: 100vh; overflow: hidden; background: #cfd4dd;
      font: 11px/18px "Open Sans", "Noto Sans", sans-serif; color: #000; }
    * { box-sizing: border-box; }
    button { font: inherit; color: inherit; border: 0; padding: 0; margin: 0; background: none; }
    u { text-underline-offset: 2px; text-decoration-thickness: 1px; }
    svg { display: block; flex: none; overflow: visible; }
    .defs { position: absolute; }
    .title { display: flex; align-items: center; gap: 5px; height: 23px; flex: none; padding-left: 2px; background: #fff; color: #8c8c8c; }
    .title h1 { margin: 0; font: inherit; }
    .menu { display: flex; align-items: center; height: 24px; flex: none; color: #3c4250; }
    .menu ul { display: flex; gap: 15px; margin: 0; padding: 0 0 0 10px; list-style: none; }
    .grip { width: 10px; height: 16px; flex: none; }
    .bars { flex: none; }
    .row { display: flex; gap: 2px; height: 26px; }
    .strip { display: flex; align-items: center; height: 26px; border-radius: 0 4px 4px 0; border-bottom: 1px solid #a9aeb9;
      background: linear-gradient(#e9edf6, #e2e6ef 45%, #cdd1db); }
    .tool { display: flex; align-items: center; justify-content: center; width: 22px; height: 22px; flex: none; }
    .tool.drop { width: 35px; gap: 7px; padding-left: 3px; justify-content: flex-start; }
    .tool.on { border: 1px solid #a08a5c; background: linear-gradient(#fbc98a, #fdb25c 45%, #ffe7a0); box-shadow: inset 0 0 0 1px #ffdc9c; }
    .sep { width: 1px; height: 14px; margin: 0 3px 0 4px; flex: none; background: #a4a9b4; box-shadow: 1px 0 #fff; }
    .combo { position: relative; width: 216px; margin: 0 2px; height: 18px; }
    .combo select { appearance: none; width: 100%; height: 18px; border: 0; border-radius: 0; padding: 0 3px; font: 12px/18px "Open Sans", sans-serif; background: #fff; color: #000; }
    .combo svg { position: absolute; right: 1px; top: 1px; pointer-events: none; }
    .work { display: flex; flex: 1; min-height: 0; border-top: 1px solid #a9aeb9; }
    .dock { display: flex; flex-direction: column; width: 357px; flex: none; border-right: 1px solid #a4aab6; background: #e9edf6; }
    .head { display: flex; align-items: center; flex: none; height: 20px; padding: 0 1px 2px 4px; background: #b9c0cb; color: #3c4250; }
    .head h2 { margin: 0; flex: 1; font: inherit; }
    .head button { width: 16px; height: 16px; display: grid; place-items: center; }
    .tree { flex: 1; min-height: 0; overflow: hidden; margin: 2px 2px 0 3px; padding: 0 0 0 2px; list-style: none; background: #fcfcf3; border: 1px solid #a0a0a0; border-right-color: #e4e4e4; border-bottom: 0; }
    .node { display: flex; align-items: center; height: 18px; white-space: nowrap; }
    .node .pic { margin: 0 4px 0 2px; }
    .node.bold { font-weight: 700; font-size: 12px; }
    .node button { width: 19px; height: 18px; }
    .main { display: flex; flex-direction: column; flex: 1; min-width: 0; margin-left: 5px; }
    .view { position: relative; flex: 1; min-height: 0; background: #fff; border: 1px solid #555; border-right: 0; border-bottom: 1px solid #e4e4e4; overflow: hidden;
      font: 11px/13px Roboto, "Liberation Sans", sans-serif; }
    .dialog { position: absolute; left: 445px; top: 351px; width: 304px; height: 136px; padding: 8px 6px; border: 1px solid #000; border-radius: 7px; background: #ffffe1; }
    .warn { display: flex; gap: 10px; align-items: flex-start; font: 700 12px/13px "Liberation Sans", sans-serif; }
    .warn h3 { margin: 0; font: inherit; }
    .dialog p { margin: 11px 0 7px; white-space: nowrap; font-family: Lato, "Liberation Sans", sans-serif; }
    .mark { display: inline-block; width: 83px; margin-left: -1px; padding-left: 1px; outline: 3px solid #c00000; }
    .dialog .actions { border-top: 1px solid #a0a0a0; padding: 7px 2px 0 0; text-align: center; }
    .ok { width: 59px; height: 22px; border: 1px solid #adadad; border-radius: 3px; font-size: 12px; }
    .ok span { outline: 1px dotted #000; }
    .panel { height: 215px; flex: none; display: flex; flex-direction: column; margin-top: 4px; border-top: 1px solid #f0f3f8; }
    .panel .strip { border-radius: 0; border-bottom: 0; padding: 0 0 2px 8px; height: 25px; flex: none; }
    .panel .head { height: 19px; }
    .sheet { flex: 1; min-height: 0; overflow: hidden; border-top: 1px solid #555; border-left: 1px solid #555; padding: 2px 0 0 1px; background: #fff; }
    table { width: 100%; table-layout: fixed; border-collapse: separate; border-spacing: 0; border-top: 1px solid #555; border-left: 1px solid #555;
      font: 11px/14px Roboto, "Liberation Sans", sans-serif; }
    th, td { height: 16px; padding: 0; font-weight: 400; border-right: 1px solid #a0a0a0; border-bottom: 1px solid #a0a0a0; white-space: nowrap; }
    .num { width: 45px; }
    .letter { height: 14px; line-height: 12px; font-size: 12px; }
    .letter, tbody th { background: #e1e1e1; border-right-color: #696969; border-bottom-color: #696969; box-shadow: inset 1px 1px #fff, inset -1px -1px #b0b0b0; }
    tbody th { font-size: 12px; }
    .letter.sel, tbody th.sel { background: #3399ff; color: #fff; }
    .corner { background: #e1e1e1; line-height: 13px; border-right-color: #696969; border-bottom-color: #696969; padding-top: 8px; box-shadow: inset 1px 1px #fff; }
    .group, .sub { background: #efefef; }
    .group { border-bottom: 0; }
    .sub { height: 17px; }
    .dim { color: #787878; }
    sub, sup { font-size: 9px; line-height: 0; }
    sub { vertical-align: -1px; }
    sup { vertical-align: 3px; }
    td.off { background: #efefef; }
    td.r { text-align: right; padding-right: 4px; }
    td.t { padding-left: 4px; }
    td.focus { outline: 1px dotted #000; outline-offset: -1px; }
    .cell { display: flex; align-items: center; height: 15px; gap: 4px; padding-left: 1px; }
    .sw { width: 13px; height: 13px; border: 1px solid #404058; flex: none; }
    .sw.a { background: #8484ff; } .sw.b { background: #6699ff; } .sw.d { background: #a0a0a0; }
    .mat span:last-child { flex: 1; text-align: center; padding-right: 6px; }
  `;

  private icon(k: unknown, cls = ""): TemplateResult {
    return html`<svg class=${cls} width="16" height="16" viewBox="0 0 16 16" aria-hidden="true">${k}</svg>`;
  }

  private grip() {
    return html`<svg class="grip" viewBox="0 0 10 16" aria-hidden="true"><path d="M5 1v15" stroke="#fff" stroke-width="2" stroke-dasharray="2 2" /><path d="M4.500 0v15" stroke="#a0a6b4" stroke-width="2" stroke-dasharray="2 2" /></svg>`;
  }

  private tools(spec: string) {
    return spec.split(" ").map((t) => {
      if (t === "|") return html`<span class="sep"></span>`;
      if (t === "#")
        return html`<span class="combo"><select aria-label="CC"><option>CC1</option></select>
          <svg width="14" height="16"><rect width="14" height="16" fill="#dde1e9" /><path d="M4 6.500h6l-3 3z" fill="#70757f" /></svg></span>`;
      const name = t.replace(/[*>]/g, "");
      const drop = t.endsWith(">");
      return html`<button type="button" aria-label=${name} class=${classMap({ tool: true, on: t[0] === "*", drop })}>
        ${this.icon(ICONS[name])}${drop ? html`<svg width="6" height="4"><path d="M0 0h6l-3 3.500z" fill="#70757f" /></svg>` : nothing}
      </button>`;
    });
  }

  private treeRow(it: Item, i: number) {
    const [level, toggle, icon, label] = it;
    const guides = [];
    for (let l = 1; l < level; l++)
      guides.push(html`<svg width="19" height="18">${hasNext(i, l) ? svg`<path d="M9.500 0v18" stroke="#808080" stroke-dasharray="1 1" />` : nothing}</svg>`);
    if (level) {
      const lines = svg`<path d=${`M9.500 0v${hasNext(i, level) ? 18 : 10}M10 10.500h10`} stroke="#808080" stroke-dasharray="1 1" />`;
      guides.push(
        toggle
          ? html`<button type="button" aria-label=${toggle}><svg width="19" height="18">${lines}<rect x="5.500" y="6.500" width="8" height="8" rx="1" fill="#f6f6f6" stroke="#8c8c8c" /><path d=${toggle === "+" ? "M7 10.500h5M9.500 8v5" : "M7 10.500h5"} stroke="#2c4a9c" /></svg></button>`
          : html`<svg width="19" height="18">${lines}</svg>`,
      );
    }
    return html`<li class=${classMap({ node: true, bold: level === 1 })}>${guides}${this.icon(treeIcon(icon), "pic")}<span>${label}</span></li>`;
  }

  private dataCell(v: string, c: number, row: number) {
    const data = row <= 2;
    if (data && c < 2) return html`<td><div class="cell"><span class="sw ${"ab"[c]}"></span><span>${keyed(v)}</span></div></td>`;
    if (data && c === 3) return html`<td><div class="cell mat"><span class="sw d"></span><span>${v}</span></div></td>`;
    const off = c >= 10 || (row === 1 && c >= 7);
    return html`<td class=${classMap({ off, dim: c >= 10, r: c === 5 || c === 6 || c >= 10, t: c === 2 || c === 4, focus: row === 2 && c === 2 })}>${keyed(v)}</td>`;
  }

  private sheet() {
    const sub = ["Geometria", "Rigidez", "Linhas de contorno nº", "Nº", "Tipo", "d [mm]", html`e <sub>Z</sub> [mm]`, "Nós nº", "Linhas nº", "Aberturas nº", html`A [m<sup>2</sup>]`, "W [kg]", ""];
    const groups: [string, number][] = [["Tipo de superfície", 2], ["", 1], ["Material", 1], ["Espessura", 2], ["Excentricidade", 1], ["Objetos integrados", 3], ["Área", 1], ["Peso", 1], ["", 1]];
    return html`<table>
      <colgroup><col class="num" />${COLS.map(([, w]) => html`<col style=${`width:${w}px`} />`)}<col /></colgroup>
      <thead>
        <tr><th class="corner" rowspan="3">Superf.<br />nº</th>${COLS.map(([l]) => html`<th class="letter ${l === "C" ? "sel" : ""}">${l}</th>`)}<th class="letter"></th></tr>
        <tr>${groups.map(([g, n]) => html`<th class="group ${g === "Área" || g === "Peso" ? "dim" : ""}" colspan=${n}>${g}</th>`)}</tr>
        <tr>${sub.map((s, i) => html`<th class="sub ${i === 10 || i === 11 ? "dim" : ""}">${s}</th>`)}</tr>
      </thead>
      <tbody>
        ${[1, 2, 3, 4, 5, 6, 7, 8].map((n) => html`<tr><th class=${n === 2 ? "sel" : ""}>${n}</th>
          ${COLS.map((_, c) => this.dataCell(ROWS[n]?.[c] ?? "", c, n))}<td class=${n > 2 ? "off" : ""}></td></tr>`)}
      </tbody>
    </table>`;
  }

  private model() {
    const pts = [[211, 95], [534, 95], [858, 95], [211, 418], [858, 418]];
    return html`<svg width="100%" height="100%" role="img" aria-label="CC1">
      <rect x="211.500" y="94.500" width="323" height="324" fill="#dedede" stroke="#222" />
      <rect x="534.500" y="94.500" width="324" height="324" fill="none" stroke="#222" />
      ${pts.map(([x, y]) => svg`<rect x=${x - 1} y=${y - 1} width="3" height="3" fill="#8c0000" />`)}
      <path d="M56 481h36" stroke="#f00" stroke-width="2" /><path d="M86 478l10 3-10 3z" fill="#a00" />
      <path d="M55 483v32" stroke="#0f0" stroke-width="2" /><path d="M52 512h6l-3 11z" fill="#0a0" />
      <rect x="52" y="478" width="6" height="6" fill="#00f" />
      <text x="4" y="16">CC1</text>
      <text x="102" y="485" font-size="10" fill="#f00">X</text><text x="52" y="535" font-size="10" fill="#0e0">Y</text>
    </svg>`;
  }

  render() {
    return html`
      <svg class="defs" width="0" height="0" aria-hidden="true"><defs>
        <linearGradient id="folder" x1="0" y1="0" x2="1" y2="1"><stop offset="0" stop-color="#fff08a" /><stop offset="1" stop-color="#d0ac10" /></linearGradient>
        <linearGradient id="rainbow" x1="0" y1="0" x2="1" y2="1"><stop offset="0" stop-color="#e33" /><stop offset=".3" stop-color="#fe3" /><stop offset=".55" stop-color="#3d5" /><stop offset=".8" stop-color="#3cf" /><stop offset="1" stop-color="#24e" /></linearGradient>
      </defs></svg>
      <header class="title">
        ${this.icon([P("M3 4l5-4 7 2 1 6-6 7-4-3z", "#223", "#5a7ca4"), P("M8 3l5 1M9 6l4 1", "#cde"), svg`<text x="0" y="15" font-family="Liberation Sans" font-weight="700" font-size="12" fill="#f0b820" stroke="#553c00" stroke-width=".5">5</text>`])}
        <h1>RFEM 5.23.01 x64 - [004646-model-file, CC1*]</h1>
      </header>
      <nav class="menu">${this.grip()}${this.icon(bridge)}<ul>${MENU.map((m) => html`<li>${keyed(m)}</li>`)}</ul></nav>
      <div class="bars">
        <div class="row">${BAR1.map((b) => html`<div class="strip">${this.grip()}${this.tools(b)}</div>`)}</div>
        <div class="row">${BAR2.map((b) => html`<div class="strip">${this.grip()}${this.tools(b)}</div>`)}</div>
      </div>
      <div class="work">
        <aside class="dock">
          <div class="head"><h2>Navegador de projetos - Dados</h2>
            <button type="button" aria-label="Fixar"><svg width="7" height="8"><path d="M1.500 0v5M5.500 0v5M1 .5h5M0 5.500h7M3.500 5v3" stroke="#555c6a" fill="none" /></svg></button>
            <button type="button" aria-label="Fechar"><svg width="8" height="8"><path d="M0 0l8 8M8 0l-8 8" stroke="#555c6a" stroke-width="1.300" /></svg></button></div>
          <ul class="tree">${TREE.map((it, i) => this.treeRow(it, i))}</ul>
        </aside>
        <main class="main">
          <section class="view">${this.model()}
            <div class="dialog" role="alertdialog" aria-label="RFEM64">
              <div class="warn">
                <svg width="32" height="30" viewBox="0 0 32 30"><path d="M15.500 3.500L2 28.500h28z" fill="#fc0" stroke="#c8c8c8" stroke-width="3" stroke-linejoin="round" /><path d="M15.500 5L4 27h24z" fill="#ffcf10" stroke="#a88400" /><path d="M13.500 11h4l-1 9h-2z" fill="#222" /><circle cx="15.500" cy="23.500" r="2" fill="#222" /></svg>
                <h3>RFEM64<br />Erro nº 410</h3>
              </div>
              <p><span class="mark">Superfície Nº 2</span><br />As linhas de definição de uma superfície não estão fechadas.<br />Verifique na tabela 1.4, ou noutra tabela relacionada.</p>
              <div class="actions"><button type="button" class="ok"><span><u>O</u>K</span></button></div>
            </div>
          </section>
          <section class="panel">
            <div class="head"><h2>1.4 Superfícies</h2></div>
            <div class="strip">${this.tools(BAR3)}</div>
            <div class="sheet">${this.sheet()}</div>
          </section>
        </main>
      </div>`;
  }
}
